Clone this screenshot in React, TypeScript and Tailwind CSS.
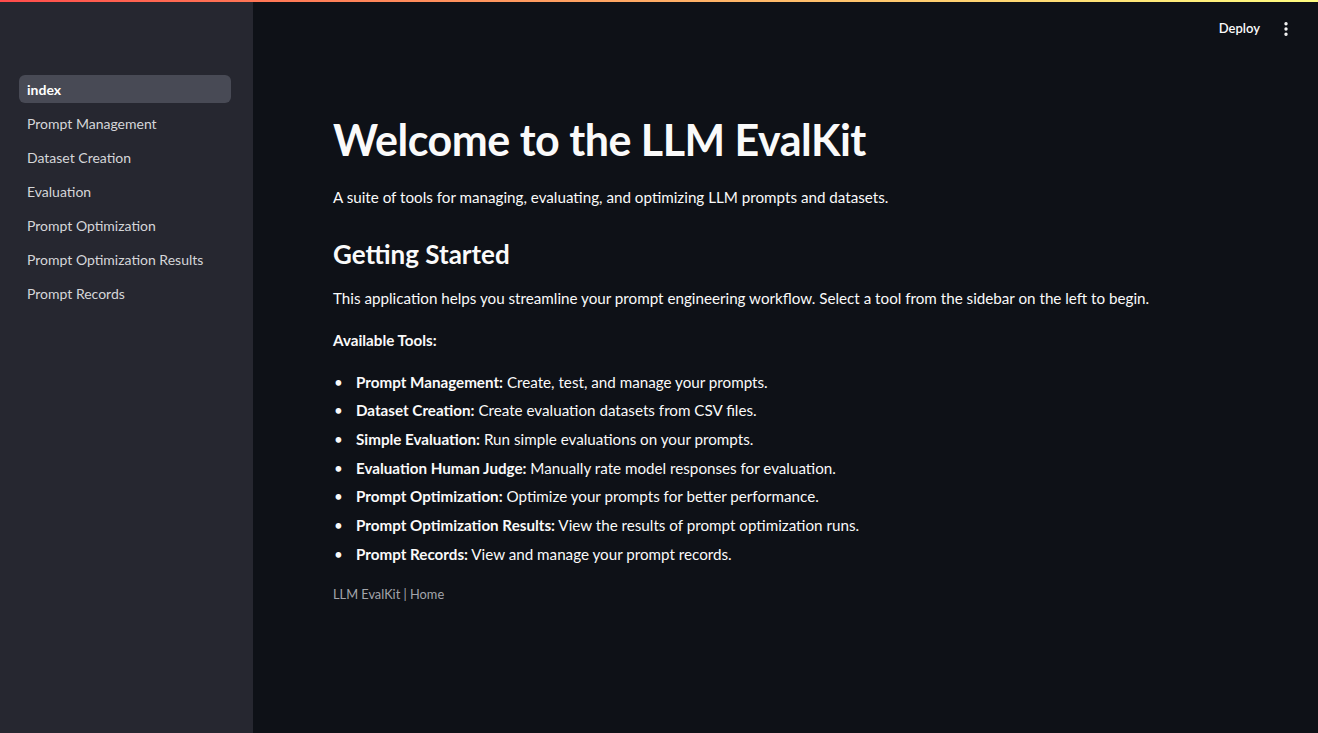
import { MoreVertical } from "lucide-react";

const pages = [
  "index",
  "Prompt Management",
  "Dataset Creation",
  "Evaluation",
  "Prompt Optimization",
  "Prompt Optimization Results",
  "Prompt Records",
];

const tools = [
  { name: "Prompt Management:", text: "Create, test, and manage your prompts." },
  { name: "Dataset Creation:", text: "Create evaluation datasets from CSV files." },
  { name: "Simple Evaluation:", text: "Run simple evaluations on your prompts." },
  { name: "Evaluation Human Judge:", text: "Manually rate model responses for evaluation." },
  { name: "Prompt Optimization:", text: "Optimize your prompts for better performance." },
  { name: "Prompt Optimization Results:", text: "View the results of prompt optimization runs." },
  { name: "Prompt Records:", text: "View and manage your prompt records." },
];

export default function App() {
  return (
    <div className="relative flex h-[733px] w-[1318px] overflow-hidden bg-[#0e1117] font-['Lato',sans-serif] text-[#fafafa]">
      <div className="absolute inset-x-0 top-0 h-[2px] bg-gradient-to-r from-[#ff4b4b] to-[#fffd80]" />

      {/* sidebar */}
      <aside className="w-[253px] shrink-0 bg-[#262730] pl-[19px] pr-[22px] pt-[75px]">
        <nav className="flex flex-col gap-[6px]">
          {pages.map((p, i) => (
            <div
              key={p}
              className={
                i === 0
                  ? "flex h-[28px] items-center rounded-md bg-[#484a55] px-2 text-[14px] font-bold text-white"
                  : "flex h-[28px] items-center px-2 text-[14px] text-[#d5d6d9]"
              }
            >
              {p}
            </div>
          ))}
        </nav>
      </aside>

      {/* main */}
      <main className="flex flex-1 flex-col">
        <header className="flex h-[57px] items-center justify-end gap-[17px] pr-[23px]">
          <span className="text-[13px] font-semibold">Deploy</span>
          <MoreVertical size={18} strokeWidth={2.5} />
        </header>

        <div className="pl-[80px] pt-[57px]">
          <h1 className="text-[43px] font-bold leading-[1.2] tracking-[-0.5px]">Welcome to the LLM EvalKit</h1>
          <p className="mt-[19px] text-[15.2px] leading-[24px]">
            A suite of tools for managing, evaluating, and optimizing LLM prompts and datasets.
          </p>

          <h2 className="mt-[27px] text-[26px] font-bold leading-[36px]">Getting Started</h2>
          <p className="mt-[14px] text-[15.2px] leading-[24px]">
            This application helps you streamline your prompt engineering workflow. Select a tool from the sidebar on
            the left to begin.
          </p>
          <p className="mt-[18px] text-[15.2px] font-bold leading-[24px]">Available Tools:</p>

          <ul className="mt-[18px] flex flex-col gap-[4.7px]">
            {tools.map((t) => (
              <li key={t.name} className="flex text-[15.2px] leading-[24px]">
                <span className="w-[23px] pl-[1px]">•</span>
                <span>
                  <b className="font-bold">{t.name}</b> {t.text}
                </span>
              </li>
            ))}
          </ul>

          <p className="mt-[19px] text-[12.8px] text-[#a3a5ab]">LLM EvalKit | Home</p>
        </div>
      </main>
    </div>
  );
}
